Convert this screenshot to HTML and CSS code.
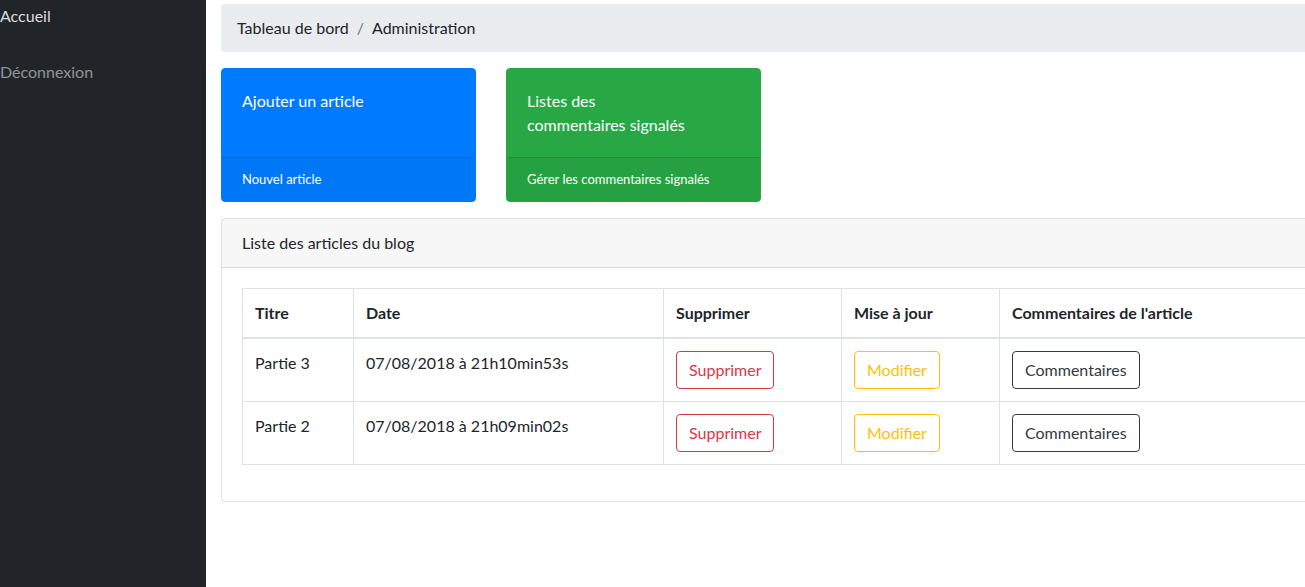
FILE: index.html
```html
<!DOCTYPE html>
<html lang="fr">
<head>
<meta charset="utf-8">
<title>Administration</title>
<link rel="stylesheet" href="styles.css">
</head>
<body>
<div class="wrapper">
  <aside class="sidebar">
    <a class="nav-link active" href="#">Accueil</a>
    <a class="nav-link" href="#">Déconnexion</a>
  </aside>
  <main class="content">
    <ol class="breadcrumb">
      <li class="crumb">Tableau de bord</li>
      <li class="crumb-sep">/</li>
      <li class="crumb">Administration</li>
    </ol>
    <div class="tiles">
      <div class="tile tile-blue">
        <div class="tile-body">Ajouter un article</div>
        <div class="tile-footer">Nouvel article</div>
      </div>
      <div class="tile tile-green">
        <div class="tile-body">Listes des<br>commentaires signalés</div>
        <div class="tile-footer">Gérer les commentaires signalés</div>
      </div>
    </div>
    <section class="card">
      <div class="card-header">Liste des articles du blog</div>
      <div class="card-body">
        <table class="table">
          <colgroup>
            <col class="c-title"><col class="c-date"><col class="c-del"><col class="c-upd"><col class="c-com">
          </colgroup>
          <thead>
            <tr><th>Titre</th><th>Date</th><th>Supprimer</th><th>Mise à jour</th><th>Commentaires de l'article</th></tr>
          </thead>
          <tbody>
            <tr>
              <td>Partie 3</td><td>07/08/2018 à 21h10min53s</td>
              <td><a class="btn btn-danger" href="#">Supprimer</a></td>
              <td><a class="btn btn-warning" href="#">Modifier</a></td>
              <td><a class="btn btn-dark" href="#">Commentaires</a></td>
            </tr>
            <tr>
              <td>Partie 2</td><td>07/08/2018 à 21h09min02s</td>
              <td><a class="btn btn-danger" href="#">Supprimer</a></td>
              <td><a class="btn btn-warning" href="#">Modifier</a></td>
              <td><a class="btn btn-dark" href="#">Commentaires</a></td>
            </tr>
          </tbody>
        </table>
      </div>
    </section>
  </main>
</div>
</body>
</html>
```

FILE: styles.css
```css
* { box-sizing: border-box; }
html, body { margin: 0; padding: 0; }
body {
  font-family: "Lato", "Open Sans", sans-serif;
  font-size: 16px;
  line-height: 24px;
  color: #212529;
  background: #fff;
  width: 1305px;
  height: 587px;
  overflow: hidden;
}
.wrapper {
  display: flex;
  height: 587px;
}
.sidebar {
  width: 206px;
  flex: 0 0 206px;
  background: #212529;
  display: flex;
  flex-direction: column;
  gap: 32px;
  padding-top: 4px;
}
.nav-link {
  color: rgba(255,255,255,0.5);
  text-decoration: none;
  line-height: 24px;
}
.nav-link.active { color: rgba(255,255,255,0.85); }
.content {
  flex: 0 0 1140px;
  padding: 4px 15px 0 15px;
}
.breadcrumb {
  list-style: none;
  margin: 0 0 16px 0;
  padding: 12px 16px;
  background: #e9ecef;
  border-radius: 4px;
  display: flex;
  gap: 8px;
}
.crumb-sep { color: #6c757d; }
.tiles {
  display: flex;
  gap: 30px;
  margin-bottom: 16px;
}
.tile {
  width: 255px;
  border-radius: 4px;
  color: #fff;
  display: flex;
  flex-direction: column;
}
.tile-blue { background: #007bff; border: 1px solid #007bff; }
.tile-green { background: #28a745; border: 1px solid #28a745; }
.tile-body {
  padding: 20px;
  flex: 1;
  min-height: 88px;
}
.tile-footer {
  border-top: 1px solid rgba(0,0,0,0.125);
  background: rgba(0,0,0,0.03);
  padding: 12px 20px;
  font-size: 13px;
  line-height: 19px;
}
.card {
  border: 1px solid rgba(0,0,0,0.125);
  border-radius: 4px;
}
.card-header {
  padding: 12px 20px;
  background: rgba(0,0,0,0.03);
  border-bottom: 1px solid rgba(0,0,0,0.125);
}
.card-body {
  padding: 20px 20px 20px 20px;
}
.table {
  width: 100%;
  border-collapse: collapse;
  table-layout: fixed;
  margin-bottom: 16px;
}
.c-title { width: 111px; }
.c-date { width: 310px; }
.c-del { width: 178px; }
.c-upd { width: 158px; }
.table th, .table td {
  border: 1px solid #dee2e6;
  padding: 12px;
  text-align: left;
  vertical-align: top;
  white-space: nowrap;
}
.table th { font-weight: 700; }
.table thead th { border-bottom: 2px solid #dee2e6; }
.btn {
  display: inline-block;
  padding: 6px 12px;
  border: 1px solid;
  border-radius: 4px;
  text-decoration: none;
  line-height: 24px;
}
.btn-danger { color: #dc3545; border-color: #dc3545; }
.btn-warning { color: #ffc107; border-color: #ffc107; }
.btn-dark { color: #343a40; border-color: #343a40; }
```
